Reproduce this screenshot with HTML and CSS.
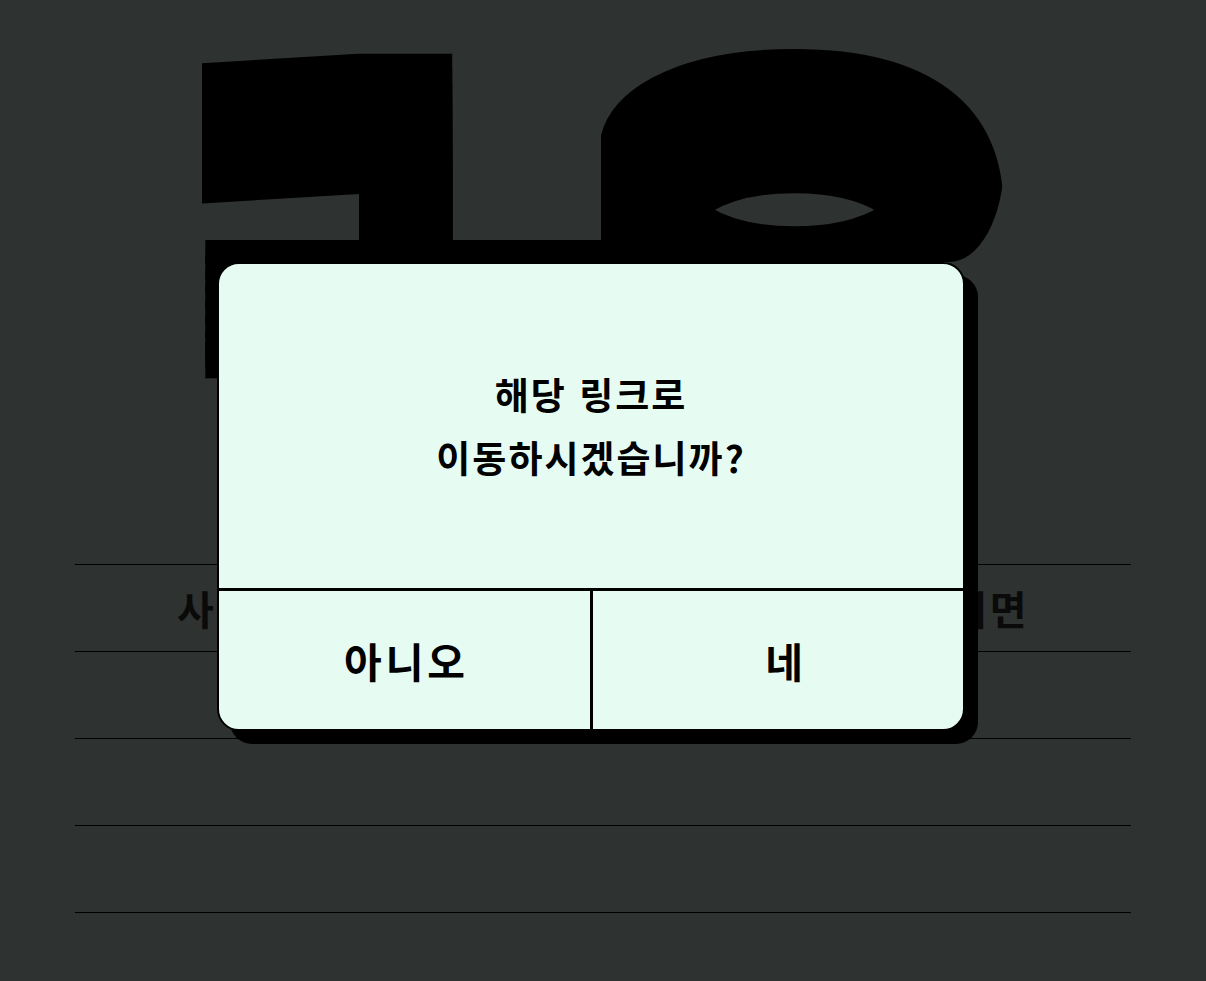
FILE: index.html
```html
<!DOCTYPE html>
<html lang="ko">
<head>
<meta charset="utf-8">
<title>19</title>
<link rel="stylesheet" href="styles.css">
</head>
<body>
<div class="page">
  <header class="hero">
    <div class="big">
      <span class="digit d1"><span class="glyph">1</span></span>
      <span class="digit d9"><span class="glyph">9</span></span>
    </div>
  </header>
  <ul class="rows">
    <li class="row"><span class="row-text">사이트 이용이 제한된 웹 페이지로 이동하시려면</span></li>
    <li class="row"></li>
    <li class="row"></li>
    <li class="row"></li>
  </ul>

  <div class="modal" role="dialog">
    <div class="message">
      <p>해당 링크로</p>
      <p>이동하시겠습니까?</p>
    </div>
    <div class="actions">
      <button class="btn">아니오</button>
      <button class="btn btn-yes">네</button>
    </div>
  </div>
</div>
</body>
</html>
```

FILE: styles.css
```css
* { box-sizing: border-box; }
html, body { margin: 0; padding: 0; }
body {
  background: #2e3231;
  font-family: "Noto Sans CJK KR", "Noto Sans", sans-serif;
  color: #000;
}
.page {
  position: relative;
  width: 1206px;
  height: 981px;
  overflow: hidden;
}
.hero {
  height: 564px;
  display: flex;
  justify-content: center;
}
.big {
  display: flex;
  height: 420px;
}
.digit {
  display: block;
}
.d1 { width: 399px; height: 420px; overflow: hidden; }
.d9 {
  width: 403px;
  height: 262px;
  overflow: hidden;
  border-bottom-right-radius: 55px 100px;
}
.glyph {
  display: block;
  font-family: "DejaVu Sans", sans-serif;
  font-weight: 400;
  font-size: 500px;
  line-height: 1;
  color: #000;
  transform-origin: left top;
  white-space: nowrap;
}
.d1 .glyph {
  margin-top: 20px;
  margin-left: -115px;
  transform: scale(1.908, 0.577);
  text-shadow:
    0 26px 0 #000, 0 52px 0 #000, 0 78px 0 #000, 0 104px 0 #000,
    0 130px 0 #000, 0 156px 0 #000, 0 178px 0 #000, 0 198px 0 #000;
}
.d9 .glyph {
  margin-top: 5px;
  margin-left: -53px;
  transform: scale(1.61, 0.848);
  text-shadow:
    0 20px 0 #000, 0 40px 0 #000, 0 60px 0 #000, 0 80px 0 #000,
    0 100px 0 #000, 0 116px 0 #000, 0 131px 0 #000;
}
.rows {
  list-style: none;
  margin: 0 75px;
  padding: 0;
}
.row {
  height: 87px;
  border-top: 1px solid #000;
  display: flex;
  align-items: center;
  justify-content: center;
}
.row:last-child { border-bottom: 1px solid #000; height: 88px; }
.row-text {
  font-size: 40px;
  font-weight: 700;
  letter-spacing: 2.4px;
  color: #0a0a0a;
  white-space: nowrap;
}
.modal {
  position: absolute;
  left: 217px;
  top: 262px;
  width: 748px;
  height: 469px;
  background: #e6fcf3;
  border: 2px solid #000;
  border-radius: 22px;
  box-shadow: 13px 13px 0 0 #000;
  display: flex;
  flex-direction: column;
  overflow: hidden;
}
.message {
  height: 324px;
  display: flex;
  flex-direction: column;
  align-items: center;
  justify-content: center;
}
.message p {
  margin: 0;
  font-size: 37px;
  font-weight: 700;
  letter-spacing: 2px;
  line-height: 63px;
}
.actions {
  flex: 1;
  display: grid;
  grid-template-columns: 371px 1fr;
  border-top: 3px solid #000;
}
.btn {
  background: transparent;
  border: 0;
  font-family: inherit;
  font-size: 41px;
  font-weight: 700;
  letter-spacing: 4px;
  color: #000;
  padding: 0 0 0 4px;
  display: flex;
  align-items: center;
  justify-content: center;
}
.btn + .btn { border-left: 3px solid #000; }
.btn-yes { padding-left: 16px; }
```
